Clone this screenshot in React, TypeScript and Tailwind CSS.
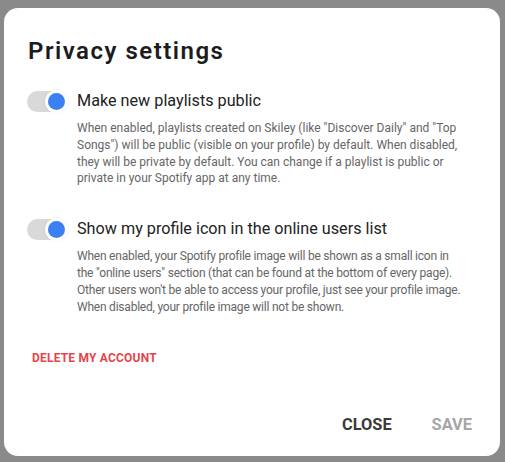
import React from 'react';
import clsx from 'clsx';

type SettingProps = {
  label: string;
  lines: string[];
  tight?: boolean;
  className?: string;
};

function Toggle() {
  return (
    <div className="relative w-[40px] h-[21px] shrink-0">
      <div className="absolute inset-0 rounded-full bg-[#d9d9d9]" />
      <div className="absolute -right-[1px] -top-[1px] w-[23px] h-[23px] rounded-full bg-white shadow-[0_0_2px_rgba(0,0,0,0.12)] flex items-center justify-center">
        <div className="w-[17px] h-[17px] rounded-full bg-[#3b7ff0]" />
      </div>
    </div>
  );
}

function Setting({ label, lines, tight, className }: SettingProps) {
  return (
    <div className={className}>
      <div className="flex items-center gap-[10px]">
        <Toggle />
        <span className="text-[16.2px] leading-[24px] text-[#222]">{label}</span>
      </div>
      <p
        className={clsx(
          'ml-[50px] mt-[7px] text-[12px] leading-[16.8px] text-[#666]',
          tight && 'tracking-[-0.22px]'
        )}
      >
        {lines.map((line) => (
          <span key={line} className="block whitespace-nowrap">
            {line}
          </span>
        ))}
      </p>
    </div>
  );
}

export default function App() {
  return (
    <div
      className="w-[505px] h-[462px] bg-[#8a8a8a] pt-[8px] pl-[4px]"
      style={{ fontFamily: 'Roboto, "Liberation Sans", sans-serif' }}
    >
      <div className="w-[496px] h-[448px] bg-white rounded-[14px] flex flex-col pt-[27px] pl-[23px] pr-[24px] pb-[19px]">
        <h2 className="ml-[1px] text-[24px] leading-[32px] font-semibold tracking-[1.5px] text-[#1c1c1c]">
          Privacy settings
        </h2>

        <Setting
          className="mt-[22px]"
          label="Make new playlists public"
          lines={[
            'When enabled, playlists created on Skiley (like "Discover Daily" and "Top',
            'Songs") will be public (visible on your profile) by default. When disabled,',
            'they will be private by default. You can change if a playlist is public or',
            'private in your Spotify app at any time.',
          ]}
        />

        <Setting
          className="mt-[30px]"
          label="Show my profile icon in the online users list"
          tight
          lines={[
            'When enabled, your Spotify profile image will be shown as a small icon in',
            'the "online users" section (that can be found at the bottom of every page).',
            "Other users won't be able to access your profile, just see your profile image.",
            'When disabled, your profile image will not be shown.',
          ]}
        />

        <button className="self-start mt-[35px] ml-[5px] text-[12px] leading-[16px] font-bold uppercase tracking-[0.2px] text-[#e5454a]">
          Delete my account
        </button>

        <div className="mt-auto flex justify-end gap-[40px] pr-[4px]">
          <button className="text-[16.4px] leading-[24px] font-bold uppercase text-[#3a3a3a]">
            Close
          </button>
          <button className="text-[16.4px] leading-[24px] font-bold uppercase text-[#a6a6a6]">
            Save
          </button>
        </div>
      </div>
    </div>
  );
}
